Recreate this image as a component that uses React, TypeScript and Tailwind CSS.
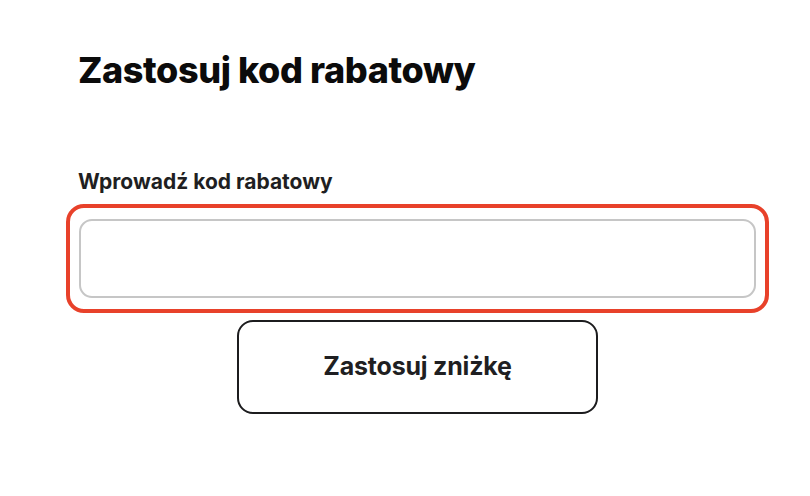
export default function App() {
  return (
    <div className="min-h-screen bg-white font-['Inter','Roboto',sans-serif]">
      <div className="w-[703px] ml-[66px] pt-[50px]">
        <h2 className="px-3 text-[36px] leading-[40px] font-extrabold tracking-[-0.4px] text-[#0b0b0b]">
          Zastosuj kod rabatowy
        </h2>
        <label
          htmlFor="discount"
          className="block mt-[80px] px-3 text-[21px] leading-[24px] font-bold text-[#1f1f22]"
        >
          Wprowadź kod rabatowy
        </label>
        {/* focused field: red ring sits around the input */}
        <div className="mt-[10px] h-[109px] rounded-[18px] border-4 border-[#e8412a] px-[9px] py-[11px]">
          <input
            id="discount"
            type="text"
            className="block w-full h-full rounded-[13px] border-2 border-[#c6c6c6] bg-white outline-none px-4 text-lg"
          />
        </div>
        <div className="flex justify-center mt-[7px]">
          <button className="w-[361px] h-[94px] rounded-[16px] border-2 border-[#1c1c1e] bg-white text-[25px] font-bold tracking-[-0.2px] text-[#1f1f22]">
            Zastosuj zniżkę
          </button>
        </div>
      </div>
    </div>
  );
}
